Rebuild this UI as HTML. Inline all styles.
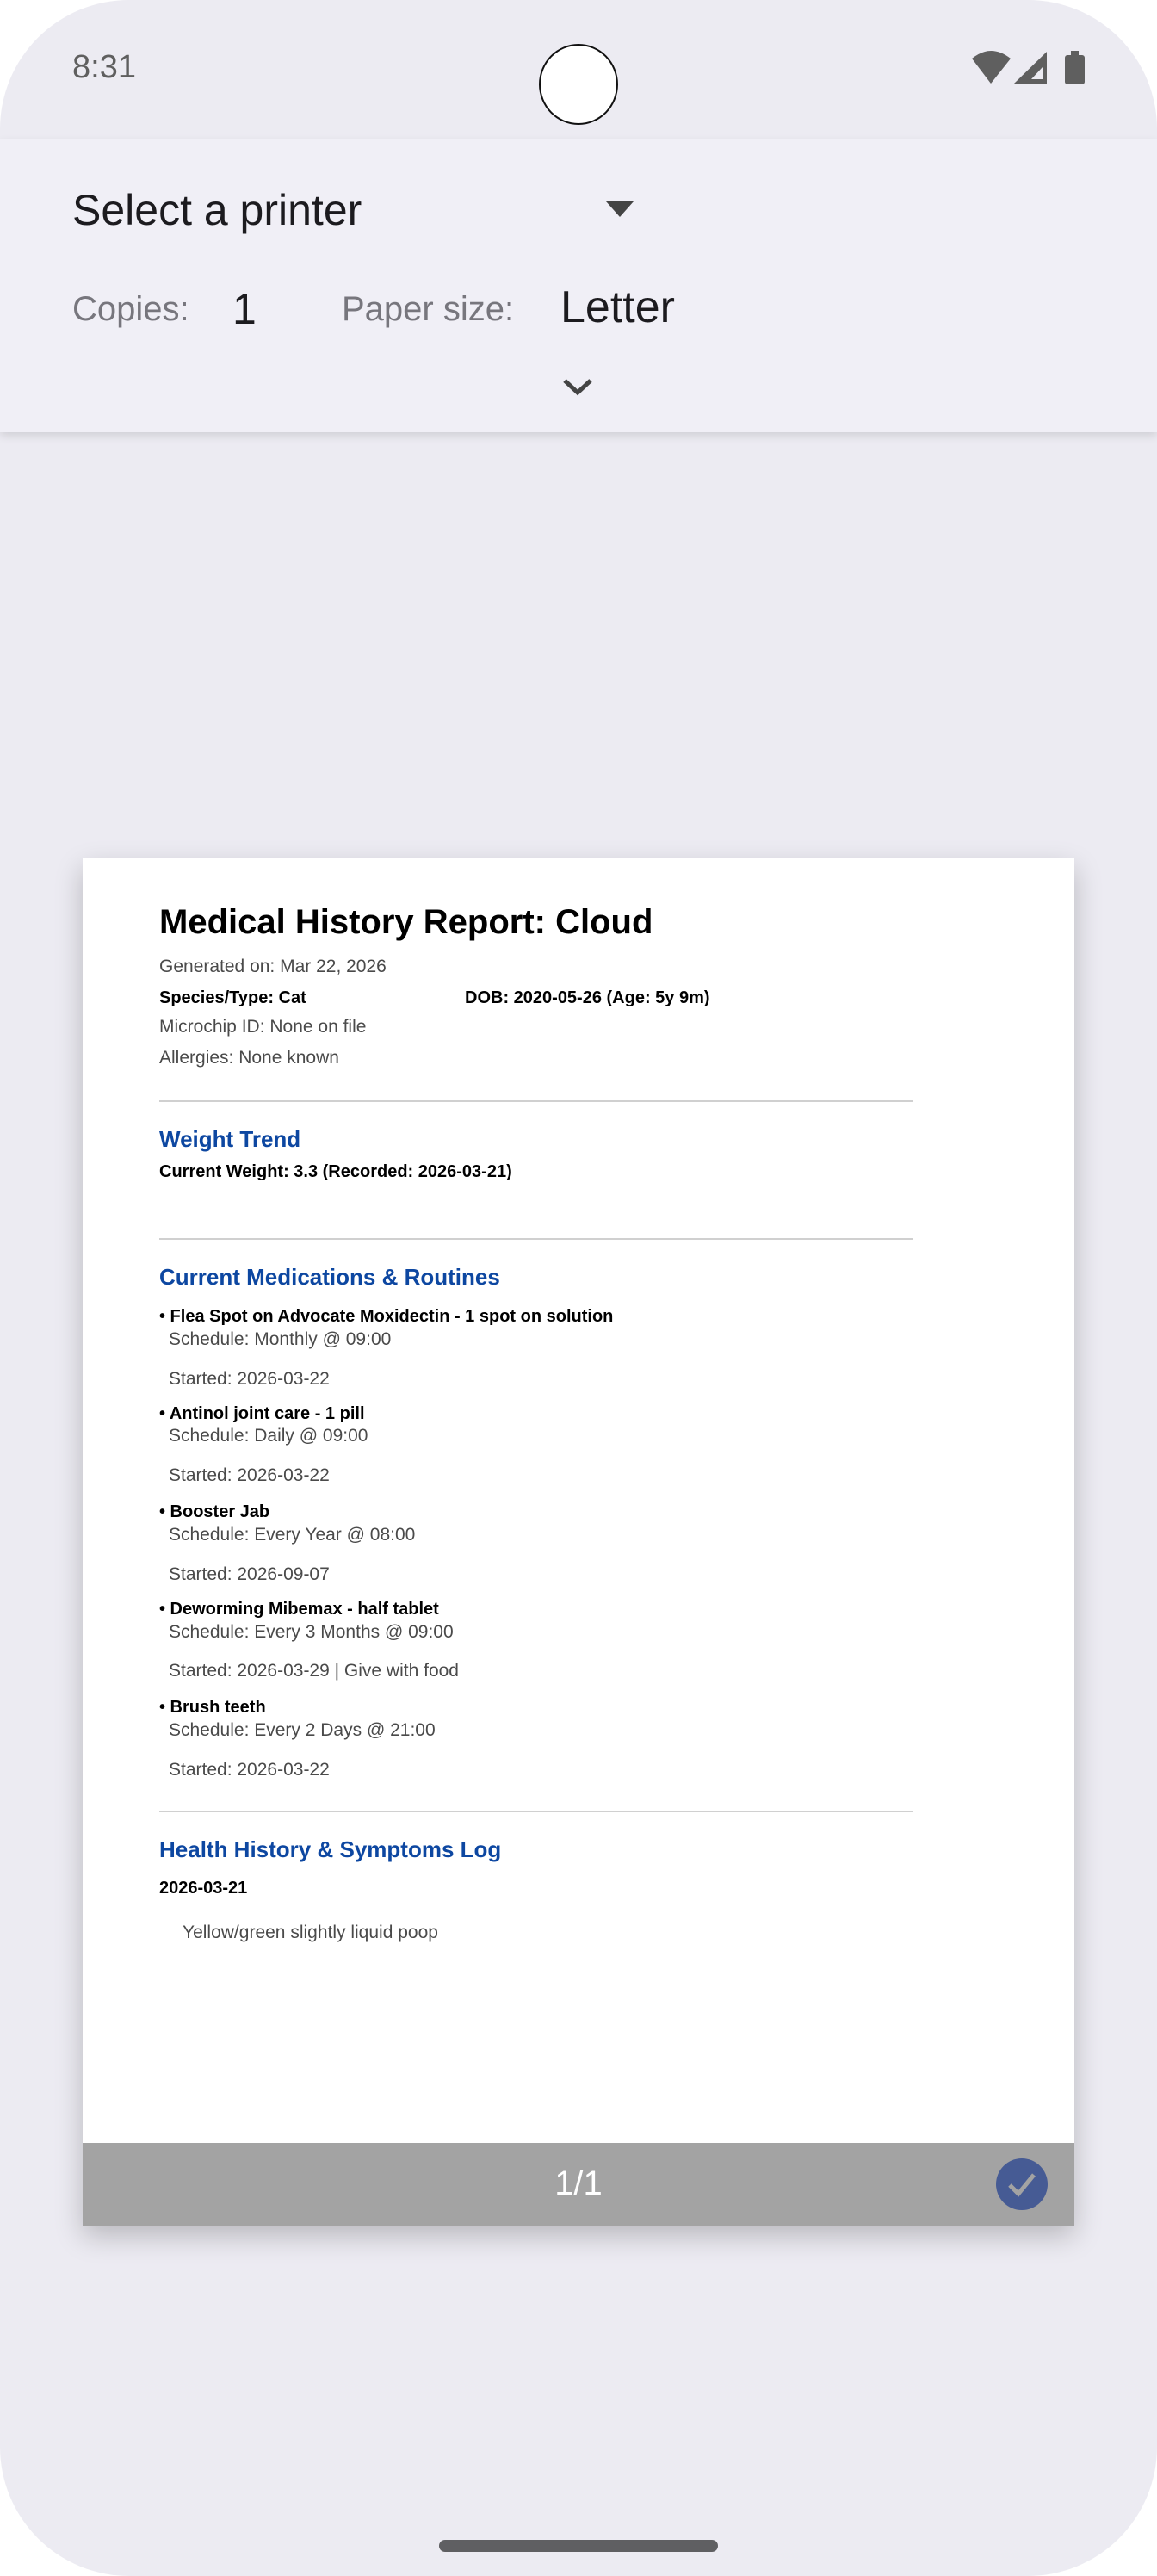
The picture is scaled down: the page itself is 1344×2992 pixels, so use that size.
<!DOCTYPE html>
<html><head><meta charset="utf-8"><style>
*{margin:0;padding:0;box-sizing:border-box}
html,body{width:1344px;height:2992px;background:#fff;overflow:hidden}
.screen{position:absolute;left:0;top:0;width:1344px;height:2992px;background:#ecebf2;border-radius:150px;overflow:hidden;font-family:"Liberation Sans",sans-serif}
.t{position:absolute;white-space:nowrap}
.hdr{position:absolute;left:0;top:162px;width:1344px;height:340px;background:#f0eff6;box-shadow:0 4px 10px rgba(0,0,0,0.12)}
.paper{position:absolute;left:96px;top:997px;width:1152px;height:1588px;background:#fff;box-shadow:0 12px 30px rgba(0,0,0,0.22)}
.p{position:absolute;white-space:nowrap;font-size:21px;line-height:30px;color:#4a4a4a}
.b{font-weight:bold;color:#000;font-size:20px}
.h{position:absolute;white-space:nowrap;font-size:26px;line-height:36px;color:#0d47a1;font-weight:bold}
.rule{position:absolute;left:89px;width:876px;height:2px;background:#d0d0d0}
</style></head><body>
<div class="screen">
<div class="t" style="left:84px;top:53px;font-size:38px;line-height:50px;color:#5f5f5f">8:31</div>
<div style="position:absolute;left:626px;top:51px;width:92px;height:94px;border-radius:50%;background:#fff;border:2px solid #111"></div>
<svg style="position:absolute;left:1125px;top:56px" width="140" height="46" viewBox="0 0 140 46">
<path d="M4 12 Q26 -6 49 12 L26 41 Z" fill="#5f5f5f"/>
<path d="M53 41 L91 4 L91 41 Z" fill="#5f5f5f"/><path d="M73 36 L86 22 L86 36 Z" fill="#ecebf2"/>
<rect x="112" y="8" width="23" height="34" rx="3" fill="#5f5f5f"/><rect x="119" y="3" width="9" height="6" fill="#5f5f5f"/>
</svg>
<div class="hdr"></div>
<div class="t" style="left:84px;top:214px;font-size:50px;line-height:60px;color:#1c1b1f">Select a printer</div>
<svg style="position:absolute;left:704px;top:234px" width="32" height="18"><path d="M0 0 L32 0 L16 18 Z" fill="#444"/></svg>
<div class="t" style="left:84px;top:329px;font-size:40px;line-height:60px;color:#77767d">Copies:</div>
<div class="t" style="left:270px;top:329px;font-size:50px;line-height:60px;color:#1c1b1f">1</div>
<div class="t" style="left:397px;top:329px;font-size:40px;line-height:60px;color:#77767d">Paper size:</div>
<div class="t" style="left:651px;top:327px;font-size:52px;line-height:60px;color:#1c1b1f">Letter</div>
<svg style="position:absolute;left:652px;top:438px" width="38" height="24"><path d="M4 4 L19 18 L34 4" stroke="#444" stroke-width="5" fill="none"/></svg>

<div class="paper">
<div class="t b" style="left:89px;top:49px;font-size:40px;line-height:50px">Medical History Report: Cloud</div>
<div class="p" style="left:89px;top:111px">Generated on: Mar 22, 2026</div>
<div class="p b" style="left:89px;top:147px">Species/Type: Cat</div>
<div class="p b" style="left:444px;top:147px">DOB: 2020-05-26 (Age: 5y 9m)</div>
<div class="p" style="left:89px;top:181px">Microchip ID: None on file</div>
<div class="p" style="left:89px;top:217px">Allergies: None known</div>
<div class="rule" style="top:281px"></div>
<div class="h" style="left:89px;top:308px">Weight Trend</div>
<div class="p b" style="left:89px;top:349px">Current Weight: 3.3 (Recorded: 2026-03-21)</div>
<div class="rule" style="top:441px"></div>
<div class="h" style="left:89px;top:468px">Current Medications &amp; Routines</div>
<div class="p b" style="left:89px;top:517px">• Flea Spot on Advocate Moxidectin - 1 spot on solution</div>
<div class="p" style="left:100px;top:544px">Schedule: Monthly @ 09:00</div>
<div class="p" style="left:100px;top:590px">Started: 2026-03-22</div>
<div class="p b" style="left:89px;top:630px">• Antinol joint care - 1 pill</div>
<div class="p" style="left:100px;top:656px">Schedule: Daily @ 09:00</div>
<div class="p" style="left:100px;top:702px">Started: 2026-03-22</div>
<div class="p b" style="left:89px;top:744px">• Booster Jab</div>
<div class="p" style="left:100px;top:771px">Schedule: Every Year @ 08:00</div>
<div class="p" style="left:100px;top:817px">Started: 2026-09-07</div>
<div class="p b" style="left:89px;top:857px">• Deworming Mibemax - half tablet</div>
<div class="p" style="left:100px;top:884px">Schedule: Every 3 Months @ 09:00</div>
<div class="p" style="left:100px;top:929px">Started: 2026-03-29 | Give with food</div>
<div class="p b" style="left:89px;top:971px">• Brush teeth</div>
<div class="p" style="left:100px;top:998px">Schedule: Every 2 Days @ 21:00</div>
<div class="p" style="left:100px;top:1044px">Started: 2026-03-22</div>
<div class="rule" style="top:1106px"></div>
<div class="h" style="left:89px;top:1133px">Health History &amp; Symptoms Log</div>
<div class="p b" style="left:89px;top:1181px">2026-03-21</div>
<div class="p" style="left:116px;top:1233px">Yellow/green slightly liquid poop</div>
<div style="position:absolute;left:0;top:1492px;width:1152px;height:96px;background:#a3a3a3"></div>
<div class="t" style="left:0;width:1152px;text-align:center;top:1514px;font-size:40px;line-height:50px;color:#fff">1/1</div>
<svg style="position:absolute;left:1061px;top:1510px" width="60" height="60"><circle cx="30" cy="30" r="30" fill="#465b94"/><path d="M16 31 L26 41 L44 19" stroke="#a3a3a3" stroke-width="5" fill="none"/></svg>
</div>
<div style="position:absolute;left:510px;top:2950px;width:324px;height:14px;border-radius:7px;background:#5f5f62"></div>
</div>
</body></html>
